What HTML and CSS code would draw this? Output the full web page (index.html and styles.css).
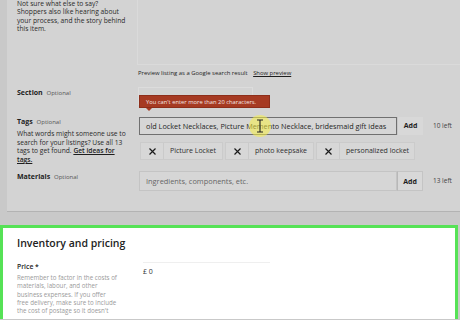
FILE: index.html
```html
<!DOCTYPE html>
<html lang="en">
<head>
  <meta charset="UTF-8" />
  <meta name="viewport" content="width=device-width, initial-scale=1.0"/>
  <title>Listing details</title>
  <link rel="stylesheet" href="styles.css">
</head>
<body>
  <div class="listing">
    <div class="row row-about">
      <div class="label">
        <p class="help">Not sure what else to say?<br>Shoppers also like hearing about<br>your process, and the story behind<br>this item.</p>
      </div>
      <div class="field">
        <div class="textarea"></div>
        <p class="preview">Preview listing as a Google search result <a class="link">Show preview</a></p>
      </div>
    </div>

    <div class="row row-section">
      <div class="label"><span class="name">Section</span> <span class="opt">Optional</span></div>
      <div class="field">
        <div class="select"></div>
        <div class="tooltip">You can't enter more than 20 characters.</div>
      </div>
    </div>

    <div class="row row-tags">
      <div class="label">
        <span class="name">Tags</span> <span class="opt">Optional</span>
        <p class="help tags-help">What words might someone use to<br>search for your listings? Use all 13<br>tags to get found. <a class="link">Get ideas for<br>tags.</a></p>
      </div>
      <div class="field">
        <div class="entry">
          <div class="input focused">old Locket Necklaces, Picture Memento Necklace, bridesmaid gift ideas</div>
          <div class="add">Add</div>
          <span class="left">10 left</span>
        </div>
        <div class="chips">
          <div class="chip"><span class="x"><svg width="7" height="7" viewBox="0 0 7 7"><path d="M.5.5l6 6M6.5.5l-6 6" stroke="#1a1a1a" stroke-width="1.2"/></svg></span><span class="chip-text">Picture Locket</span></div>
          <div class="chip"><span class="x"><svg width="7" height="7" viewBox="0 0 7 7"><path d="M.5.5l6 6M6.5.5l-6 6" stroke="#1a1a1a" stroke-width="1.2"/></svg></span><span class="chip-text">photo keepsake</span></div>
          <div class="chip"><span class="x"><svg width="7" height="7" viewBox="0 0 7 7"><path d="M.5.5l6 6M6.5.5l-6 6" stroke="#1a1a1a" stroke-width="1.2"/></svg></span><span class="chip-text">personalized locket</span></div>
        </div>
        <div class="click">
          <svg width="8" height="14" viewBox="0 0 8 14"><path d="M1 1h2.5l.5.6.5-.6H7M4 1.6v10.8M1 13h2.5l.5-.6.5.6H7" fill="none" stroke="#222" stroke-width="1.1"/></svg>
        </div>
      </div>
    </div>

    <div class="row row-materials">
      <div class="label"><span class="name">Materials</span> <span class="opt">Optional</span></div>
      <div class="field">
        <div class="entry">
          <div class="input placeholder">Ingredients, components, etc.</div>
          <div class="add tall">Add</div>
          <span class="left">13 left</span>
        </div>
      </div>
    </div>
  </div>

  <div class="inventory">
    <h2>Inventory and pricing</h2>
    <div class="row row-price">
      <div class="label">
        <span class="name light">Price *</span>
        <p class="help muted">Remember to factor in the costs of<br>materials, labour, and other<br>business expenses. If you offer<br>free delivery, make sure to include<br>the cost of postage so it doesn't</p>
      </div>
      <div class="field">
        <div class="price">£ 0</div>
      </div>
    </div>
  </div>
</body>
</html>
```

FILE: styles.css
```css
body {
  margin: 0;
  width: 460px;
  height: 320px;
  overflow: hidden;
  background: #c9c9c9;
  font-family: 'Open Sans', sans-serif;
  font-size: 7px;
  color: #1e1e1e;
}
p {
  margin: 0;
}
.listing {
  margin-left: 7px;
  height: 212px;
  padding-left: 10px;
  background: #d3d3d3;
  border-bottom: 1px solid #b3b3b3;
  box-sizing: border-box;
}
.row {
  display: flex;
}
.label {
  width: 121px;
  flex-shrink: 0;
  font-size: 7px;
  line-height: 11px;
}
.field {
  flex: 1;
  position: relative;
}
.name {
  font-size: 7px;
  font-weight: 700;
}
.opt {
  font-size: 6px;
  color: #555;
  margin-left: 2px;
}
.help {
  font-size: 6.7px;
  line-height: 8.4px;
  color: #2a2a2a;
  white-space: nowrap;
}
.link {
  color: #1e1e1e;
  font-weight: 600;
  text-decoration: underline;
}
.textarea {
  height: 65px;
  margin-left: -1px;
  border: 1px solid #dadada;
  border-top: none;
  border-right: none;
  box-sizing: border-box;
}
.preview {
  margin-top: 4px;
  font-size: 5.9px;
  line-height: 9px;
}
.preview .link {
  margin-left: 4px;
  font-weight: 400;
}
.row-section {
  margin-top: 9px;
}
.select {
  width: 115px;
  height: 18px;
  border: 1px solid #dcdcdc;
  box-sizing: border-box;
}
.tooltip {
  position: absolute;
  top: 8px;
  left: 1px;
  width: 131px;
  height: 13px;
  background: #a63a22;
  color: #f4e6e2;
  font-size: 5.8px;
  line-height: 12px;
  padding-left: 6px;
  box-sizing: border-box;
  border: 1px solid #8d2e1a;
}
.tooltip::after {
  content: "";
  position: absolute;
  left: 6px;
  bottom: -4px;
  border-left: 3px solid transparent;
  border-right: 3px solid transparent;
  border-top: 3px solid #a63a22;
}
.row-tags {
  margin-top: 11px;
}
.tags-help {
  margin-top: 2px;
  line-height: 8.7px;
}
.entry {
  display: flex;
  align-items: center;
}
.input {
  width: 258px;
  height: 18px;
  padding-left: 6px;
  font-size: 7.3px;
  line-height: 16px;
  white-space: nowrap;
  overflow: hidden;
  box-sizing: border-box;
  background: #d6d6d6;
}
.focused {
  margin-left: 1px;
  margin-top: 1px;
  border: 1px solid #707070;
}
.placeholder {
  height: 20px;
  line-height: 18px;
  color: #666;
  font-size: 7.4px;
  border: 1px solid #c4c4c4;
  margin-left: 1px;
}
.add {
  width: 26px;
  height: 18px;
  line-height: 18px;
  text-align: center;
  font-size: 7px;
  font-weight: 700;
  background: #d8d8d8;
  border-left: 1px solid #c8c8c8;
  box-sizing: border-box;
}
.tall {
  height: 20px;
  line-height: 20px;
  border: 1px solid #c4c4c4;
  border-left-color: #b8b8b8;
}
.left {
  margin-left: 10px;
  font-size: 6.5px;
  color: #444;
}
.chips {
  display: flex;
  gap: 2px;
  margin-top: 7px;
  margin-left: 2px;
}
.chip {
  display: flex;
  height: 18px;
  border: 1px solid #cbcbcb;
  background: #d7d7d7;
  box-sizing: border-box;
}
.x {
  width: 22px;
  display: flex;
  align-items: center;
  justify-content: center;
  border-right: 1px solid #cacaca;
}
.chip-text {
  padding: 0 6px;
  font-size: 7px;
  line-height: 16px;
  color: #2e2e2e;
}
.chip:last-child .chip-text {
  padding-right: 5px;
}
.click {
  position: absolute;
  left: 111px;
  top: -1px;
  width: 22px;
  height: 22px;
  border-radius: 50%;
  background: rgba(247, 240, 70, 0.55);
  display: flex;
  align-items: center;
  justify-content: center;
}
.row-materials {
  margin-top: 6px;
}
.inventory {
  margin-top: 13px;
  width: 458px;
  height: 94px;
  background: #fff;
  border: 3px solid #56e256;
  border-bottom: none;
  box-sizing: border-box;
  padding-left: 14px;
}
.inventory h2 {
  margin: 8px 0 0;
  font-size: 10.5px;
  font-weight: 600;
  line-height: 14px;
  color: #222;
}
.row-price {
  margin-top: 12px;
}
.inventory .label {
  width: 126px;
  line-height: 10px;
}
.light {
  font-weight: 600;
  font-size: 6.8px;
}
.muted {
  margin-top: 2px;
  font-size: 6.2px;
  line-height: 8.3px;
  color: #9a9a9a;
}
.price {
  width: 127px;
  border-top: 1px solid #efefef;
  padding-top: 4px;
  font-size: 7px;
  line-height: 10px;
  color: #333;
}
```
